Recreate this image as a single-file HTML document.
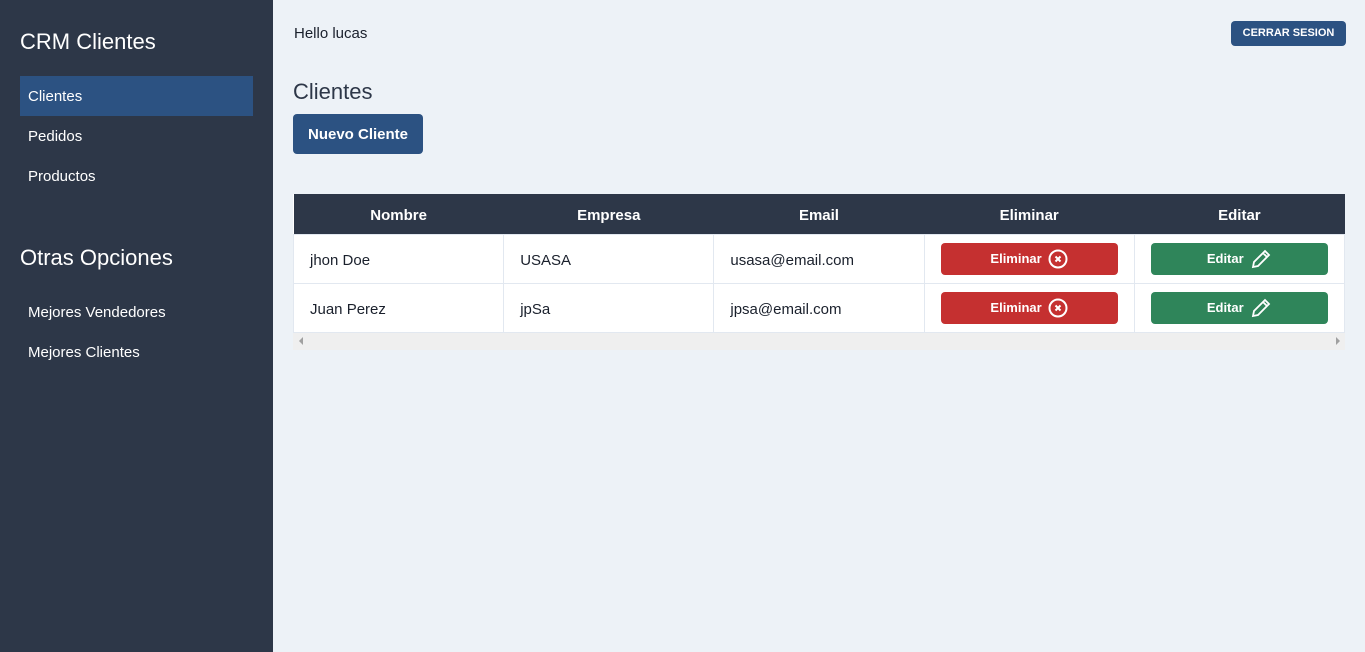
<!DOCTYPE html>
<html><head><style>
*{box-sizing:border-box;margin:0;padding:0}
body{width:1365px;height:652px;background:#edf2f7;font-family:"Liberation Sans",sans-serif;position:relative;overflow:hidden;color:#1a202c}
.side{position:absolute;left:0;top:0;width:273px;height:652px;background:#2d3748;color:#fff;padding:0 20px}
.side h2{font-weight:normal;font-size:22px;position:absolute;left:20px}
.side a{position:absolute;left:20px;width:233px;height:40px;line-height:42px;padding-left:8px;font-size:15px;color:#fff}
.act{background:#2c5282}
.btn{position:absolute;color:#fff;font-weight:bold;border-radius:4px;text-align:center}
table{position:absolute;left:293px;top:194px;width:1052px;border-collapse:collapse;background:#fff}
th{background:#2d3748;color:#fff;height:40px;font-size:15px;font-weight:bold;padding-top:3px}
td{height:49px;border:1px solid #e2e8f0;padding-left:16px;padding-top:3px;font-size:15px;width:20%}
.b{display:flex;align-items:center;justify-content:center;gap:6px;height:32px;width:177px;border-radius:4px;color:#fff;font-weight:bold;font-size:13px;margin-top:-3px}
.r{background:#c53030}.g{background:#2f855a}
</style></head><body>
<div class="side">
<h2 style="top:29px">CRM Clientes</h2>
<a class="act" style="top:76px">Clientes</a>
<a style="top:116px">Pedidos</a>
<a style="top:156px">Productos</a>
<h2 style="top:245px">Otras Opciones</h2>
<a style="top:292px">Mejores Vendedores</a>
<a style="top:332px">Mejores Clientes</a>
</div>
<div style="position:absolute;left:294px;top:25px;font-size:15px">Hello lucas</div>
<div class="btn" style="left:1231px;top:21px;width:115px;height:25px;line-height:25px;font-size:11px;background:#2c5282">CERRAR SESION</div>
<div style="position:absolute;left:293px;top:79px;font-size:22px;font-weight:300;color:#2d3748">Clientes</div>
<div class="btn" style="left:293px;top:114px;width:130px;height:40px;line-height:42px;font-size:15px;background:#2c5282">Nuevo Cliente</div>
<table>
<tr><th>Nombre</th><th>Empresa</th><th>Email</th><th>Eliminar</th><th>Editar</th></tr>
<tr><td>jhon Doe</td><td>USASA</td><td>usasa@email.com</td><td><div class="b r">Eliminar <svg width="20" height="20" viewBox="0 0 20 20" fill="none" stroke="#fff" stroke-width="2"><circle cx="10" cy="10" r="8.5"/><path d="M7.5 7.5l5 5M12.5 7.5l-5 5"/></svg></div></td><td><div class="b g">Editar <svg width="22" height="22" viewBox="0 0 22 22" fill="none" stroke="#fff" stroke-width="1.8"><path d="M15 3l4 4L8 18l-5 1 1-5z M13 5l4 4"/></svg></div></td></tr>
<tr><td>Juan Perez</td><td>jpSa</td><td>jpsa@email.com</td><td><div class="b r">Eliminar <svg width="20" height="20" viewBox="0 0 20 20" fill="none" stroke="#fff" stroke-width="2"><circle cx="10" cy="10" r="8.5"/><path d="M7.5 7.5l5 5M12.5 7.5l-5 5"/></svg></div></td><td><div class="b g">Editar <svg width="22" height="22" viewBox="0 0 22 22" fill="none" stroke="#fff" stroke-width="1.8"><path d="M15 3l4 4L8 18l-5 1 1-5z M13 5l4 4"/></svg></div></td></tr>
</table>
<div style="position:absolute;left:293px;top:333px;width:1052px;height:17px;background:#efefef"></div>
<div style="position:absolute;left:299px;top:337px;border:4px solid transparent;border-right-color:#a0a0a0;border-left:0"></div>
<div style="position:absolute;left:1336px;top:337px;border:4px solid transparent;border-left-color:#a0a0a0;border-right:0"></div>
</body></html>
